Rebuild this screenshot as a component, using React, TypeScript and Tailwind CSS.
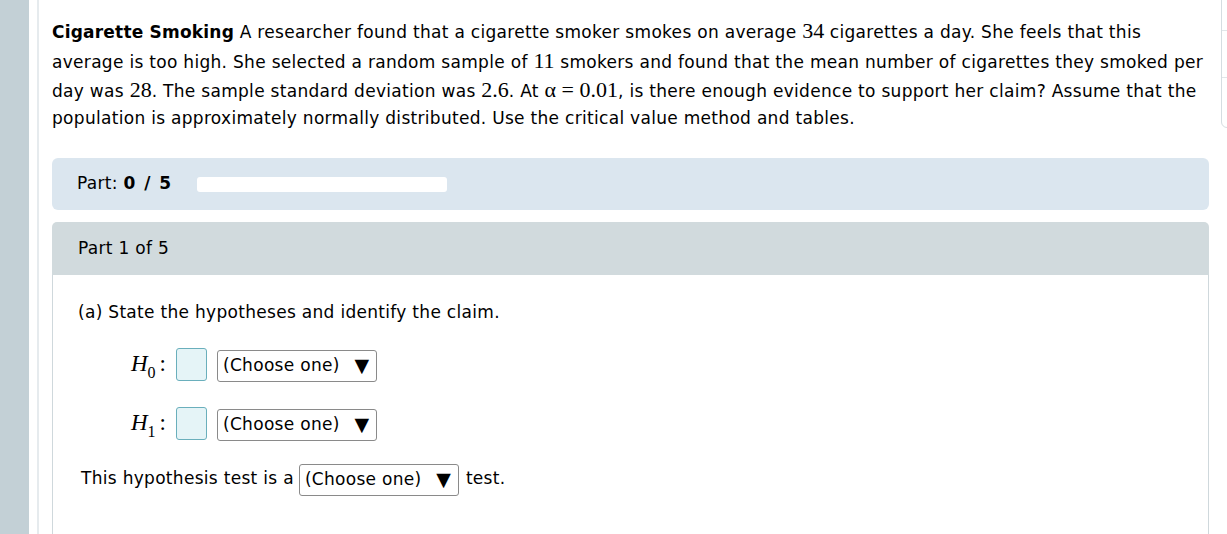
import React from "react";

const sans = { fontFamily: '"DejaVu Sans", Verdana, sans-serif' };

function M({ children }: { children: React.ReactNode }) {
  return (
    <span className="font-['Liberation_Serif',serif] text-[22px] leading-none tracking-normal">{children}</span>
  );
}

function Select() {
  return (
    <div className="flex h-[32px] w-[160px] items-center justify-between rounded-[3px] border border-[#8a8a8a] bg-white pl-[5px] pr-[7px] text-[17px] tracking-[0.3px] text-black">
      <span>(Choose one)</span>
      <span className="relative -top-[1px] text-[19px] leading-none tracking-normal">▼</span>
    </div>
  );
}

function HRow({ sub }: { sub: string }) {
  return (
    <div className="flex items-center">
      <div className="flex w-[98px] items-center justify-end pr-[10px] font-['Liberation_Serif',serif] text-[23px] tracking-normal">
        <span className="italic">H</span>
        <span className="relative top-[8px] text-[16px]">{sub}</span>
        <span className="ml-[4px]">:</span>
      </div>
      <div className="h-[33px] w-[31px] rounded-[3px] border border-[#6aafbc] bg-[#e5f4f7]" />
      <div className="ml-[10px] mt-[3px]">
        <Select />
      </div>
    </div>
  );
}

export default function App() {
  return (
    <div className="relative flex h-[534px] w-[1227px] overflow-hidden bg-white text-black tracking-[0.3px]" style={sans}>
      <div className="w-[29px] shrink-0 bg-[#c3d0d6]" />
      <div className="ml-[8px] w-[2px] shrink-0 bg-[#e6ebee]" />
      <div className="ml-[13px] w-[1157px] shrink-0">
        <div className="mt-[17px] whitespace-nowrap text-[17px]">
          <span className="block h-[30px] leading-[30px]">
            <b className="tracking-[0.2px]">Cigarette Smoking</b> A researcher found that a cigarette smoker smokes on average <M>34</M> cigarettes a day. She feels that this
          </span>
          <span className="block h-[30px] leading-[30px]">
            average is too high. She selected a random sample of <M>11</M> smokers and found that the mean number of cigarettes they smoked per
          </span>
          <span className="block h-[29px] leading-[29px]">
            day was <M>28</M>. The sample standard deviation was <M>2.6</M>. At <M>α = 0.01</M>, is there enough evidence to support her claim? Assume that the
          </span>
          <span className="block h-[24px] leading-[24px]">
            population is approximately normally distributed. Use the critical value method and tables.
          </span>
        </div>

        <div className="mt-[28px] flex h-[52px] items-center rounded-[6px] bg-[#dbe6ef] pl-[25px] text-[17px]">
          <span>
            Part: <b className="tracking-[1.5px]">0 / 5</b>
          </span>
          <div className="ml-[24px] h-[15px] w-[250px] rounded-[3px] bg-white" />
        </div>

        <div className="mt-[12px] rounded-t-[5px]">
          <div className="flex h-[53px] items-center rounded-t-[5px] bg-[#d1dadd] pl-[26px] text-[17px]">
            Part 1 of 5
          </div>
          <div className="h-[300px] border-x border-[#cfd8dc] pl-[25px] text-[17px]">
            <div className="pt-[27px] leading-[20px]">(a) State the hypotheses and identify the claim.</div>
            <div className="mt-[25px] flex flex-col gap-[24px]">
              <HRow sub="0" />
              <HRow sub="1" />
            </div>
            <div className="mt-[20px] flex items-center pl-[3px]">
              <span>This hypothesis test is a</span>
              <div className="ml-[5px] mt-[3px]">
                <Select />
              </div>
              <span className="ml-[7px]">test.</span>
            </div>
          </div>
        </div>
      </div>

      <div className="absolute right-[-10px] top-[-10px] h-[138px] w-[16px] rounded-bl-[6px] border border-[#d5dde1] bg-white">
        <div className="absolute left-0 right-0 top-[39px] h-px bg-[#e1e6e9]" />
        <div className="absolute left-0 right-0 top-[86px] h-px bg-[#e1e6e9]" />
      </div>
    </div>
  );
}
